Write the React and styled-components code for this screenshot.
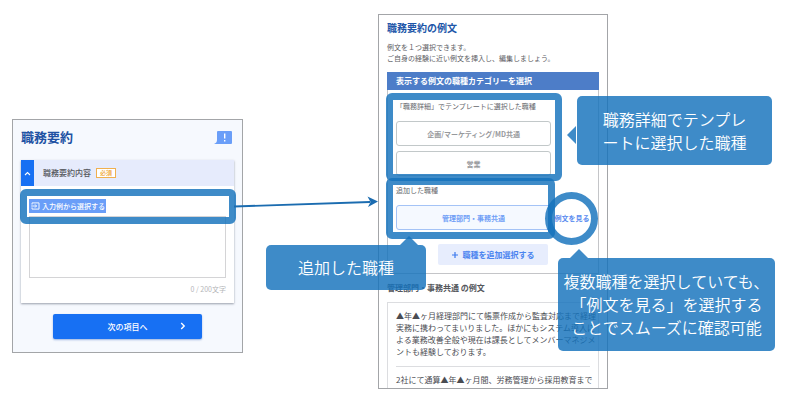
import React, { useState } from "react";

import styled, { createGlobalStyle } from "styled-components";

const GlobalStyle = createGlobalStyle`
  * {
    box-sizing: border-box;
  }
  body {
    margin: 0;
    background: #fff;
    font-family: "Noto Sans CJK JP", "Liberation Sans", sans-serif;
  }
  h1, h2, h3, p, ul {
    margin: 0;
    padding: 0;
  }
  button, textarea {
    font-family: inherit;
  }
`;

const overlay = "rgba(20, 114, 188, 0.82)";

const StyledPage = styled.main`
  display: grid;
  grid-template-columns:
    minmax(0, 231fr) minmax(0, 135fr) minmax(0, 230fr)
    minmax(0, 189fr);
  align-items: start;
  padding: 14px 0 22px 12px;
`;

/* left: entry form */
const StyledForm = styled.form`
  position: relative;
  margin-top: 105px;
  padding: 7px 8px 13px;
  border: 1px solid #a3a5a8;
  background: #f6f9fe;
`;
const StyledFormHeader = styled.div`
  display: flex;
  justify-content: space-between;
  align-items: center;
  height: 20px;
  margin-bottom: 13px;
  padding-right: 2px;
`;
const StyledFormTitle = styled.h1`
  font-size: 13px;
  line-height: 20px;
  font-weight: 700;
  color: #2152a3;
`;
const StyledCard = styled.section`
  background: #fff;
  box-shadow: 0 1px 2px rgba(60, 70, 90, 0.5);
`;
const StyledCardHeader = styled.div`
  display: flex;
  align-items: center;
  height: 26px;
  background: #e6ebfc;
`;
const StyledToggle = styled.button`
  display: flex;
  align-items: center;
  justify-content: center;
  width: 13px;
  height: 100%;
  padding: 0;
  border: 0;
  background: #1770f3;
`;
const StyledCardLabel = styled.label`
  margin: 0 5px 0 9px;
  font-size: 8px;
  line-height: 12px;
  font-weight: 500;
  color: #55575d;
`;
const StyledBadge = styled.span`
  width: 20px;
  border: 1px solid #f0b04f;
  background: #fff;
  font-size: 6px;
  line-height: 8px;
  font-weight: 500;
  text-align: center;
  color: #eda02c;
`;
const StyledCardBody = styled.div`
  padding: 13px 8px 8px;
`;
const StyledExampleRow = styled.div`
  position: relative;
  display: flex;
  height: 14px;
`;
const StyledExampleButton = styled.button`
  display: flex;
  align-items: center;
  gap: 2px;
  padding: 0 1px 0 2px;
  border: 0;
  background: #6a9ef8;
  font-size: 7px;
  line-height: 14px;
  font-weight: 500;
  white-space: nowrap;
  color: #fff;
`;
const StyledTextarea = styled.textarea`
  display: block;
  width: 100%;
  height: 62px;
  margin-top: 3px;
  padding: 4px;
  border: 1px solid #d4d4d6;
  background: #fff;
  font-size: 8px;
  resize: none;
`;
const StyledCount = styled.p`
  margin-top: 5px;
  font-size: 7px;
  line-height: 12px;
  text-align: right;
  color: #b4b5b8;
`;
const StyledNextButton = styled.button`
  position: relative;
  display: block;
  width: 70%;
  height: 25px;
  margin: 11px auto 0;
  padding: 0;
  border: 0;
  border-radius: 2px;
  background: #1770f3;
  box-shadow: 0 1px 2px rgba(23, 80, 180, 0.4);
  font-size: 8px;
  font-weight: 500;
  color: #fff;

  svg {
    position: absolute;
    top: 8px;
    right: 16px;
  }
`;

/* arrow between both screens */
const StyledArrow = styled.svg`
  position: relative;
  z-index: 2;
  width: calc(100% + 9px);
  height: 14px;
  margin: 181px 0 0 -9px;
`;

/* right: example dialog */
const StyledExampleArea = styled.div`
  position: relative;
`;
const StyledDialog = styled.section`
  max-height: 375px;
  padding: 5px 8px 0;
  overflow: hidden;
  border: 1px solid #a3a5a8;
  background: #fff;
`;
const StyledDialogTitle = styled.h2`
  font-size: 10px;
  line-height: 16px;
  font-weight: 700;
  color: #2156a8;
`;
const StyledLead = styled.p`
  margin: 6px 0 8px;
  font-size: 7px;
  line-height: 11px;
  white-space: nowrap;
  color: #5e6065;
`;
const StyledBand = styled.h3`
  padding-left: 9px;
  background: #4d7dc8;
  font-size: 8px;
  line-height: 18px;
  font-weight: 700;
  white-space: nowrap;
  color: #fff;
`;
const StyledFilter = styled.div`
  padding: 11px 8px 8px;
  border: 1px solid #c4c5c8;
  border-top: 0;
`;
const StyledGroup = styled.div`
  position: relative;
  width: 80%;
  margin-bottom: 9px;
`;
const StyledGroupLabel = styled.p`
  margin-bottom: 10px;
  font-size: 7px;
  line-height: 10px;
  white-space: nowrap;
  color: #66686d;
`;
const StyledOption = styled.button`
  display: block;
  width: 100%;
  height: 25px;
  padding: 0;
  border: 1px solid ${(props) => (props.$active ? "#a4c3f6" : "#c2c8c9")};
  border-radius: 3px;
  background: ${(props) => (props.$active ? "#f5f9ff" : "#fff")};
  font-size: 7px;
  font-weight: 700;
  color: ${(props) => (props.$active ? "#6f9ef6" : "#97999c")};

  & + & {
    margin-top: 5px;
  }
`;
const StyledAddedRow = styled.div`
  display: grid;
  grid-template-columns: 80% 20%;
  align-items: end;

  ${StyledGroup} {
    width: 100%;
    margin: 0;
  }
`;
const StyledLinkCell = styled.div`
  position: relative;
  display: flex;
  justify-content: center;
  align-items: center;
  height: 25px;
  padding-left: 3px;
`;
const StyledLink = styled.a`
  font-size: 7px;
  line-height: 10px;
  font-weight: 700;
  white-space: nowrap;
  text-decoration: none;
  color: #5a8cf0;
`;
const StyledAddButton = styled.button`
  display: flex;
  justify-content: center;
  align-items: center;
  gap: 5px;
  width: 110px;
  height: 21px;
  margin: 14px auto 0;
  padding: 0;
  border: 0;
  border-radius: 2px;
  background: #e7edfd;
  font-size: 8px;
  font-weight: 700;
  white-space: nowrap;
  color: #4a84f0;
`;
const StyledListTitle = styled.h3`
  margin: 8px 0;
  font-size: 8px;
  line-height: 12px;
  font-weight: 700;
  color: #55575c;
`;
const StyledList = styled.ul`
  padding: 0 8px;
  border: 1px solid #dcdde0;
  list-style: none;
`;
const StyledListItem = styled.li`
  padding: 7px 0 8px;
  font-size: 8px;
  line-height: 12px;
  white-space: pre;
  color: #4a4c52;

  & + & {
    border-top: 1px solid #dcdde0;
  }
`;

/* annotations lying over the screens */
const StyledHighlight = styled.span`
  position: absolute;
  z-index: 1;
  inset: ${(props) => props.$inset};
  border: 7px solid ${overlay};
  border-radius: 6px;
  pointer-events: none;
`;
const StyledRing = styled.span`
  position: absolute;
  z-index: 1;
  top: calc(50% - 26px);
  left: calc(50% - 26px);
  width: 53px;
  height: 53px;
  border: 7px solid ${overlay};
  border-radius: 50%;
  pointer-events: none;
`;
const StyledCallout = styled.p`
  position: absolute;
  z-index: 2;
  top: ${(props) => props.$top}px;
  left: ${(props) => props.$left}px;
  display: flex;
  justify-content: center;
  align-items: center;
  width: ${(props) => props.$width}px;
  height: ${(props) => props.$height}px;
  border-radius: 5px;
  background: ${overlay};
  font-size: 16px;
  line-height: 23px;
  font-weight: 350;
  text-align: center;
  white-space: pre;
  color: #fff;
`;
const StyledPointerUp = styled.span`
  position: absolute;
  bottom: 100%;
  left: ${(props) => props.$left}px;
  width: 18px;
  height: 9px;
  background: ${overlay};
  clip-path: polygon(50% 0, 100% 100%, 0 100%);
`;
const StyledPointerLeft = styled.span`
  position: absolute;
  top: 30px;
  right: calc(100% + 1px);
  width: 9px;
  height: 18px;
  background: ${overlay};
  clip-path: polygon(0 50%, 100% 0, 100% 100%);
`;

const templateJobs = ["企画/マーケティング/MD共通", "営業"];

const examples = [
  "▲年▲ヶ月経理部門にて帳票作成から監査対応まで経理\n実務に携わってまいりました。ほかにもシステム導入に\nよる業務改善全般や現在は課長としてメンバーマネジメ\nントも経験しております。",
  "2社にて通算▲年▲ヶ月間、労務管理から採用教育まで",
];

const HintIcon = () => (
  <svg width="18" height="13" viewBox="0 0 18 13" aria-hidden="true">
    <path
      d="M4 0h13a1 1 0 0 1 1 1v11a1 1 0 0 1-1 1H0c2-1 3-2 3-4V1a1 1 0 0 1 1-1z"
      fill="#6a9ef8"
    />
    <path d="M10.7 2.5v5M10.7 9v1.6" stroke="#fff" strokeWidth="1.4" />
  </svg>
);

const EnterIcon = () => (
  <svg width="9" height="8" viewBox="0 0 9 8" fill="none" stroke="#fff" aria-hidden="true">
    <path d="M1 2.6V.9h7v6.2H1V5.4M.2 4h5.2M4 2.4 5.6 4 4 5.6" strokeWidth="0.9" />
  </svg>
);

const SummaryForm = () => {
  const [text, setText] = useState("");

  return (
    <StyledForm onSubmit={(e) => e.preventDefault()}>
      <StyledFormHeader>
        <StyledFormTitle>職務要約</StyledFormTitle>
        <HintIcon />
      </StyledFormHeader>
      <StyledCard>
        <StyledCardHeader>
          <StyledToggle type="button" aria-label="閉じる">
            <svg width="7" height="5" viewBox="0 0 7 5" fill="none" stroke="#fff">
              <path d="m1 4 2.5-2.5L6 4" strokeWidth="1.1" />
            </svg>
          </StyledToggle>
          <StyledCardLabel htmlFor="summary">職務要約内容</StyledCardLabel>
          <StyledBadge>必須</StyledBadge>
        </StyledCardHeader>
        <StyledCardBody>
          <StyledExampleRow>
            <StyledExampleButton type="button">
              <EnterIcon />
              入力例から選択する
            </StyledExampleButton>
            <StyledHighlight $inset="-10px -10px -11px -9px" />
          </StyledExampleRow>
          <StyledTextarea
            id="summary"
            value={text}
            onChange={(e) => setText(e.target.value)}
          />
          <StyledCount>{text.length} / 200文字</StyledCount>
        </StyledCardBody>
      </StyledCard>
      <StyledNextButton type="submit">
        次の項目へ
        <svg width="6" height="8" viewBox="0 0 6 8" fill="none" stroke="#fff">
          <path d="m1.2 1 3 3-3 3" strokeWidth="1.4" />
        </svg>
      </StyledNextButton>
    </StyledForm>
  );
};

const ExampleDialog = () => (
  <StyledDialog>
    <StyledDialogTitle>職務要約の例文</StyledDialogTitle>
    <StyledLead>
      例文を１つ選択できます。
      <br />
      ご自身の経験に近い例文を挿入し、編集しましょう。
    </StyledLead>
    <StyledBand>表示する例文の職種カテゴリーを選択</StyledBand>
    <StyledFilter>
      <StyledGroup>
        <StyledGroupLabel>「職務詳細」でテンプレートに選択した職種</StyledGroupLabel>
        {templateJobs.map((job) => (
          <StyledOption key={job} type="button">
            {job}
          </StyledOption>
        ))}
        <StyledHighlight $inset="-8px -11px -5px -10px" />
      </StyledGroup>
      <StyledAddedRow>
        <StyledGroup>
          <StyledGroupLabel>追加した職種</StyledGroupLabel>
          <StyledOption type="button" $active>
            管理部門・事務共通
          </StyledOption>
          <StyledHighlight $inset="-7px -4px -9px -10px" />
        </StyledGroup>
        <StyledLinkCell>
          <StyledLink href="#examples">例文を見る</StyledLink>
          <StyledRing />
        </StyledLinkCell>
      </StyledAddedRow>
      <StyledAddButton type="button">
        <svg width="6" height="6" viewBox="0 0 6 6" stroke="#3b79ee" aria-hidden="true">
          <path d="M3 0v6M0 3h6" strokeWidth="1.2" />
        </svg>
        職種を追加選択する
      </StyledAddButton>
    </StyledFilter>
    <StyledListTitle id="examples">管理部門・事務共通 の例文</StyledListTitle>
    <StyledList>
      {examples.map((example) => (
        <StyledListItem key={example}>{example}</StyledListItem>
      ))}
    </StyledList>
  </StyledDialog>
);

const App = () => {
  return (
    <>
      <GlobalStyle />
      <StyledPage>
        <SummaryForm />
        <StyledArrow viewBox="0 0 144 14" preserveAspectRatio="none" aria-hidden="true">
          <path d="M0 11.5 136 7" stroke="#1b6cb0" strokeWidth="1.8" />
          <path d="M144 6.6 133.5 1.5 136.5 7 134 12z" fill="#1b6cb0" />
        </StyledArrow>
        <StyledExampleArea>
          <ExampleDialog />
          <StyledCallout $top={82} $left={199} $width={195} $height={69}>
            {"職務詳細でテンプレ\nートに選択した職種"}
            <StyledPointerLeft />
          </StyledCallout>
          <StyledCallout $top={231} $left={-112} $width={160} $height={45}>
            追加した職種
            <StyledPointerUp $left={134} />
          </StyledCallout>
          <StyledCallout $top={244} $left={180} $width={217} $height={93}>
            {"複数職種を選択していても、\n「例文を見る」を選択する\nことでスムーズに確認可能"}
            <StyledPointerUp $left={12} />
          </StyledCallout>
        </StyledExampleArea>
      </StyledPage>
    </>
  );
};

export default App;
